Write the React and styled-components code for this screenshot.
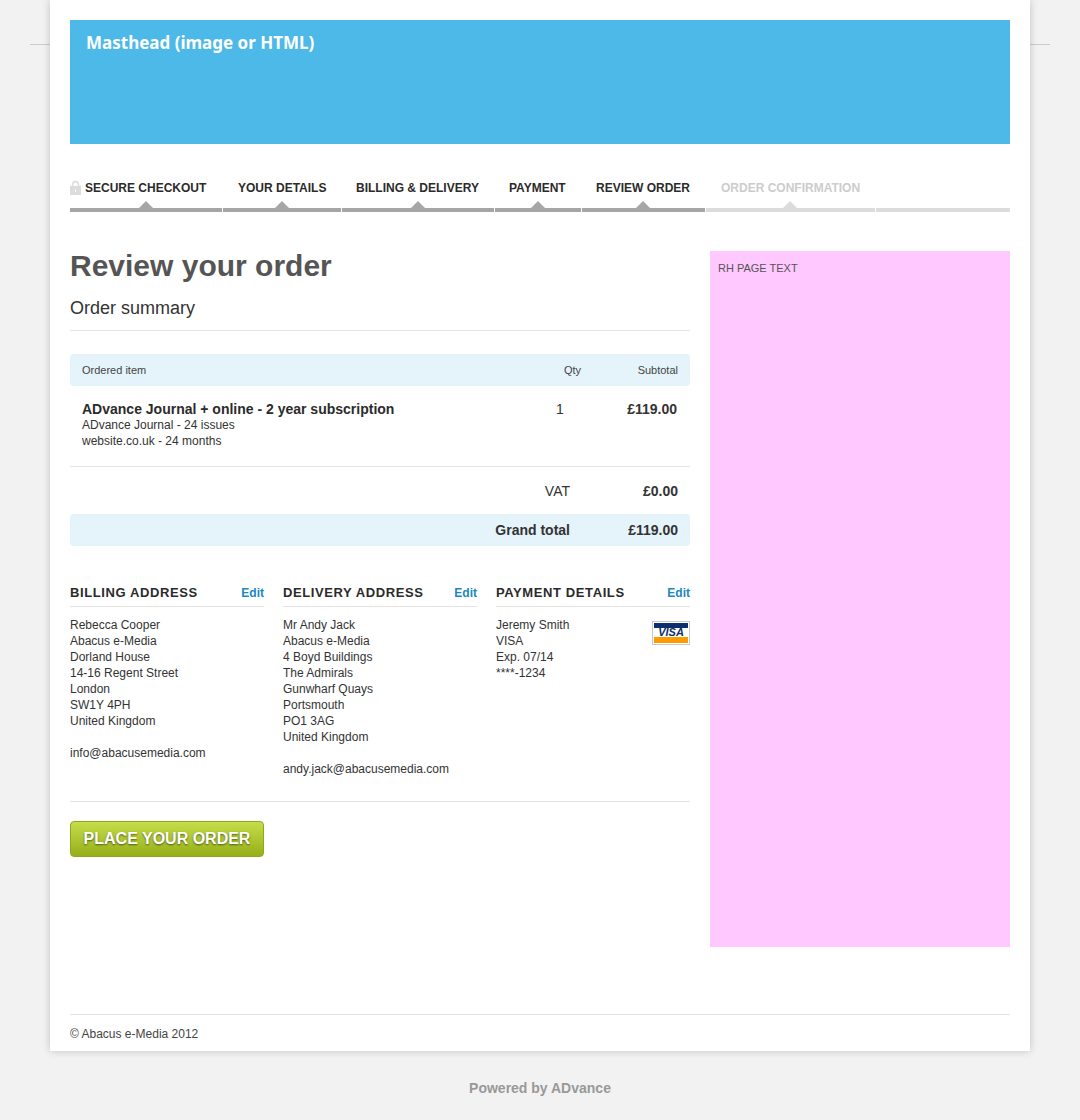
import styled, { createGlobalStyle } from "styled-components";

const GlobalStyle = createGlobalStyle`
html, body {
  margin: 0;
  padding: 0;
  background: #f2f2f2;
  font-family: "Liberation Sans", Arial, sans-serif;
  color: #333;
}
* { box-sizing: border-box; }
`;

const Wrapper = styled.div`
  position: relative;
  width: 1080px;
  height: 1120px;
  overflow: hidden;
`;

const SideLine = styled.div`
  position: absolute;
  top: 44px;
  left: 30px;
  width: 1020px;
  height: 1px;
  background: #ccc;
`;

const Page = styled.div`
  position: relative;
  width: 980px;
  height: 1051px;
  margin-left: 50px;
  padding: 20px 20px 0;
  background: #fff;
  box-shadow: 0 0 8px rgba(0, 0, 0, 0.2);
  display: flex;
  flex-direction: column;
`;

const Masthead = styled.div`
  height: 124px;
  padding: 13px 16px;
  background: #4db9e9;
  color: #fff;
  font-family: "Noto Sans", sans-serif;
  font-size: 17px;
  font-weight: 700;
  line-height: 20px;
`;

const Steps = styled.div`
  display: flex;
  gap: 1px;
  margin-top: 36px;
`;

const Step = styled.div`
  position: relative;
  flex: 0 0 ${(p) => p.$w}px;
  height: 32px;
  padding-left: ${(p) => p.$pad}px;
  border-bottom: 4px solid ${(p) => (p.$off ? "#dcdcdc" : "#a6a6a6")};
  color: ${(p) => (p.$off ? "#ccc" : "#2b2b2b")};
  font-size: 12px;
  font-weight: 700;
  line-height: 16px;
  white-space: nowrap;
  display: flex;
  align-items: flex-start;
`;

const StepArrow = styled.span`
  position: absolute;
  left: ${(p) => p.$x}px;
  bottom: 0;
  width: 0;
  height: 0;
  border-left: 7px solid transparent;
  border-right: 7px solid transparent;
  border-bottom: 7px solid ${(p) => (p.$off ? "#dcdcdc" : "#a6a6a6")};
`;

const Lock = styled.svg`
  width: 11px;
  height: 15px;
  margin-right: 4px;
  flex: none;
`;

const Columns = styled.div`
  display: flex;
  gap: 20px;
  margin-top: 39px;
`;

const Main = styled.div`
  width: 620px;
`;

const Title = styled.h1`
  margin: 0;
  color: #555;
  font-size: 30px;
  font-weight: 700;
  line-height: 30px;
`;

const SubTitle = styled.h2`
  margin: 17px 0 0;
  padding-bottom: 12px;
  border-bottom: 1px solid #e4e4e4;
  color: #333;
  font-size: 18px;
  font-weight: 400;
  line-height: 20px;
`;

const Band = styled.div`
  display: flex;
  align-items: center;
  height: 32px;
  margin-top: ${(p) => p.$top}px;
  padding-left: 12px;
  background: #e5f4fb;
  border-radius: 4px;
`;

const HeadCell = styled.div`
  flex: ${(p) => (p.$w ? `0 0 ${p.$w}px` : "1")};
  text-align: ${(p) => p.$align || "left"};
  font-size: 11px;
  color: #444;
`;

const ItemRow = styled.div`
  display: flex;
  height: 81px;
  padding: 15px 0 0 12px;
  border-bottom: 1px solid #e4e4e4;
`;

const ItemInfo = styled.div`
  flex: 1;
  font-size: 12px;
  line-height: 16px;
`;

const ItemName = styled.div`
  font-size: 14px;
  font-weight: 700;
  line-height: 16px;
  color: #2b2b2b;
`;

const QtyCell = styled.div`
  flex: 0 0 ${(p) => p.$w}px;
  text-align: ${(p) => p.$align};
  font-size: 14px;
  line-height: 16px;
  font-weight: ${(p) => (p.$bold ? 700 : 400)};
`;

const TotalRow = styled.div`
  display: flex;
  justify-content: flex-end;
  align-items: center;
  height: 47px;
  font-size: 14px;
`;

const TotalLabel = styled.div`
  font-weight: ${(p) => (p.$bold ? 700 : 400)};
  font-size: 14px;
`;

const TotalValue = styled.div`
  flex: 0 0 120px;
  text-align: right;
  padding-right: 12px;
  font-size: 14px;
  font-weight: 700;
`;

const Addresses = styled.div`
  display: grid;
  grid-template-columns: 194px 194px 194px;
  column-gap: 19px;
  height: 217px;
  margin-top: 39px;
  border-bottom: 1px solid #e4e4e4;
`;

const AddressHead = styled.div`
  display: flex;
  justify-content: space-between;
  align-items: baseline;
  height: 22px;
  border-bottom: 1px solid #e4e4e4;
  line-height: 16px;
`;

const AddressTitle = styled.div`
  font-size: 13px;
  font-weight: 700;
  letter-spacing: 0.6px;
  color: #2b2b2b;
`;

const EditLink = styled.a`
  font-size: 12px;
  font-weight: 700;
  color: #1c88bf;
`;

const AddressBody = styled.div`
  position: relative;
  padding-top: 10px;
  font-size: 12px;
  line-height: 16px;
  color: #333;
`;

const Gap = styled.div`
  height: 16px;
`;

const VisaCard = styled.div`
  position: absolute;
  top: 14px;
  right: 0;
  width: 38px;
  height: 24px;
  border: 1px solid #c8c8c8;
  background: #fff;
  padding: 1px;
  display: flex;
  flex-direction: column;
  justify-content: space-between;
`;

const VisaBlue = styled.span`
  height: 5px;
  background: #0b2f6b;
`;

const VisaOrange = styled.span`
  height: 6px;
  background: #fb9d00;
`;

const VisaText = styled.span`
  font-size: 11px;
  line-height: 9px;
  font-weight: 700;
  font-style: italic;
  text-align: center;
  color: #0b2f6b;
`;

const OrderButton = styled.button`
  display: block;
  width: 194px;
  height: 36px;
  margin-top: 19px;
  padding: 0;
  border: 1px solid #8ea81c;
  border-radius: 4px;
  background: linear-gradient(#c6dd4a, #96af18);
  color: #fff;
  font-family: inherit;
  font-size: 16px;
  font-weight: 700;
  text-shadow: 0 1px 2px rgba(0, 0, 0, 0.55);
`;

const Aside = styled.div`
  width: 300px;
  height: 696px;
  padding: 10px 8px;
  background: #ffc8ff;
  color: #555;
  font-size: 11px;
  line-height: 14px;
`;

const Footer = styled.div`
  margin-top: 67px;
  padding-top: 12px;
  border-top: 1px solid #e4e4e4;
  font-size: 12px;
  line-height: 14px;
  color: #444;
`;

const Powered = styled.div`
  position: relative;
  margin-top: 29px;
  text-align: center;
  color: #999;
  font-size: 14px;
  font-weight: 700;
  line-height: 16px;
`;

const steps = [
  { label: "SECURE CHECKOUT", w: 152, pad: 0, arrow: 69, lock: true },
  { label: "YOUR DETAILS", w: 118, pad: 15, arrow: 52 },
  { label: "BILLING & DELIVERY", w: 152, pad: 14, arrow: 69 },
  { label: "PAYMENT", w: 86, pad: 14, arrow: 36 },
  { label: "REVIEW ORDER", w: 123, pad: 14, arrow: 54 },
  { label: "ORDER CONFIRMATION", w: 169, pad: 15, arrow: 77, off: true },
  { label: "", w: 134, pad: 0, off: true },
];

const billing = ["Rebecca Cooper", "Abacus e-Media", "Dorland House", "14-16 Regent Street", "London", "SW1Y 4PH", "United Kingdom"];
const delivery = ["Mr Andy Jack", "Abacus e-Media", "4 Boyd Buildings", "The Admirals", "Gunwharf Quays", "Portsmouth", "PO1 3AG", "United Kingdom"];
const payment = ["Jeremy Smith", "VISA", "Exp. 07/14", "****-1234"];

function Lines({ items }) {
  return items.map((line) => <div key={line}>{line}</div>);
}

function App() {
  return (
    <Wrapper>
      <GlobalStyle />
      <SideLine />
      <Page>
        <Masthead>Masthead (image or HTML)</Masthead>
        <Steps>
          {steps.map((s, i) => (
            <Step key={i} $w={s.w} $pad={s.pad} $off={s.off}>
              {s.lock && (
                <Lock viewBox="0 0 11 15">
                  <path d="M2.5 7V4.5a3 3 0 0 1 6 0V7" fill="none" stroke="#dcdcdc" strokeWidth="1.6" />
                  <rect x="0" y="6" width="11" height="9" fill="#dcdcdc" />
                  <rect x="5" y="9.5" width="1" height="2.5" fill="#fff" />
                </Lock>
              )}
              {s.label}
              {s.arrow && <StepArrow $x={s.arrow} $off={s.off} />}
            </Step>
          ))}
        </Steps>
        <Columns>
          <Main>
            <Title>Review your order</Title>
            <SubTitle>Order summary</SubTitle>
            <Band $top={23}>
              <HeadCell>Ordered item</HeadCell>
              <HeadCell $w={40} $align="right">Qty</HeadCell>
              <HeadCell $w={109} $align="right" style={{ paddingRight: 12 }}>Subtotal</HeadCell>
            </Band>
            <ItemRow>
              <ItemInfo>
                <ItemName>ADvance Journal + online - 2 year subscription</ItemName>
                ADvance Journal - 24 issues
                <br />
                website.co.uk - 24 months
              </ItemInfo>
              <QtyCell $w={20} $align="center">1</QtyCell>
              <QtyCell $w={120} $align="right" $bold style={{ paddingRight: 13 }}>£119.00</QtyCell>
            </ItemRow>
            <TotalRow>
              <TotalLabel>VAT</TotalLabel>
              <TotalValue>£0.00</TotalValue>
            </TotalRow>
            <Band $top={0}>
              <HeadCell />
              <TotalLabel $bold>Grand total</TotalLabel>
              <TotalValue>£119.00</TotalValue>
            </Band>
            <Addresses>
              <div>
                <AddressHead>
                  <AddressTitle>BILLING ADDRESS</AddressTitle>
                  <EditLink>Edit</EditLink>
                </AddressHead>
                <AddressBody>
                  <Lines items={billing} />
                  <Gap />
                  info@abacusemedia.com
                </AddressBody>
              </div>
              <div>
                <AddressHead>
                  <AddressTitle>DELIVERY ADDRESS</AddressTitle>
                  <EditLink>Edit</EditLink>
                </AddressHead>
                <AddressBody>
                  <Lines items={delivery} />
                  <Gap />
                  andy.jack@abacusemedia.com
                </AddressBody>
              </div>
              <div>
                <AddressHead>
                  <AddressTitle>PAYMENT DETAILS</AddressTitle>
                  <EditLink>Edit</EditLink>
                </AddressHead>
                <AddressBody>
                  <Lines items={payment} />
                  <VisaCard>
                    <VisaBlue />
                    <VisaText>VISA</VisaText>
                    <VisaOrange />
                  </VisaCard>
                </AddressBody>
              </div>
            </Addresses>
            <OrderButton>PLACE YOUR ORDER</OrderButton>
          </Main>
          <Aside>RH PAGE TEXT</Aside>
        </Columns>
        <Footer>© Abacus e-Media 2012</Footer>
      </Page>
      <Powered>Powered by ADvance</Powered>
    </Wrapper>
  );
}

export default App;
